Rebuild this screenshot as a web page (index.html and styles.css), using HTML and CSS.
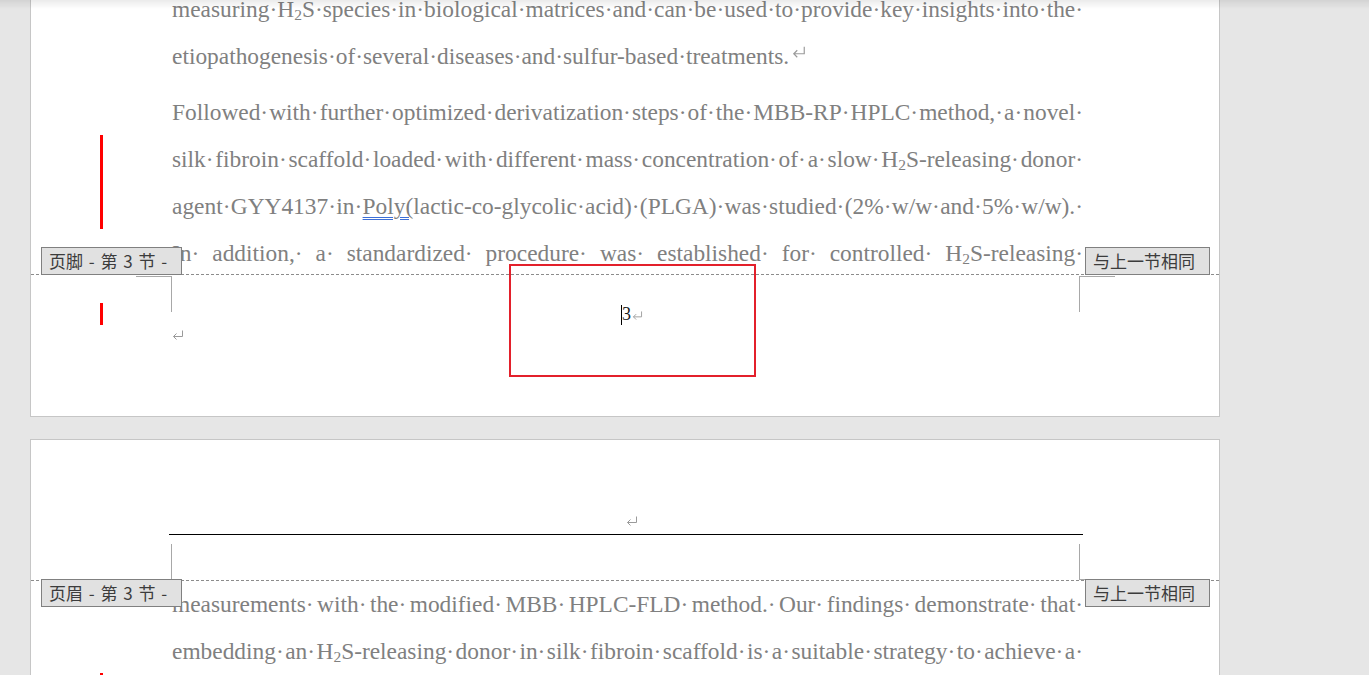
FILE: index.html
```html
<!DOCTYPE html>
<html lang="en">
<head>
<meta charset="utf-8">
<title>Document</title>
<link rel="stylesheet" href="styles.css">
</head>
<body>
<div class="doc">
  <div class="page page-1">
    <i class="bar bar-a"></i>
    <i class="bar bar-b"></i>
    <div class="text">
      <div class="para">
        <div class="ln j">measuring· H<sub>2</sub>S· species· in· biological· matrices· and· can· be· used· to· provide· key· insights· into· the·</div>
        <div class="ln l">etiopathogenesis·of·several·diseases·and·sulfur-based·treatments.<svg class="ret ret-body" viewBox="0 0 12 10"><path d="M10.5 0.5V6.5H1.5M4.5 3.5L1.5 6.5L4.5 9.5"/></svg></div>
      </div>
      <div class="para">
        <div class="ln j">Followed· with· further· optimized· derivatization· steps· of· the· MBB-RP· HPLC· method,· a· novel·</div>
        <div class="ln j">silk· fibroin· scaffold· loaded· with· different· mass· concentration· of· a· slow· H<sub>2</sub>S-releasing· donor·</div>
        <div class="ln j">agent· GYY4137· in· <span class="gram">Poly(</span>lactic-co-glycolic· acid)· (PLGA)· was· studied· (2%· w/w· and· 5%· w/w).·</div>
        <div class="ln j">In· addition,· a· standardized· procedure· was· established· for· controlled· H<sub>2</sub>S-releasing·</div>
      </div>
    </div>
    <div class="foot">
      <div class="sep"></div>
      <span class="tag tag-l tag-up">页脚 - 第 3 节 -</span>
      <span class="tag tag-r tag-up">与上一节相同</span>
      <div class="marks">
        <i class="mk mk-tl"></i>
        <i class="mk mk-tr"></i>
      </div>
      <div class="foot-para"><svg class="ret ret-foot" viewBox="0 0 12 10"><path d="M10.5 0.5V6.5H1.5M4.5 3.5L1.5 6.5L4.5 9.5"/></svg></div>
      <div class="pgbox">
        <div class="pgnum"><i class="caret"></i><span class="num">3</span><svg class="ret ret-num" viewBox="0 0 12 10"><path d="M10.5 0.5V6.5H1.5M4.5 3.5L1.5 6.5L4.5 9.5"/></svg></div>
      </div>
    </div>
  </div>

  <div class="page page-2">
    <i class="bar bar-c"></i>
    <div class="head">
      <div class="head-para"><svg class="ret ret-head" viewBox="0 0 12 10"><path d="M10.5 0.5V6.5H1.5M4.5 3.5L1.5 6.5L4.5 9.5"/></svg></div>
      <div class="marks marks-head">
        <i class="mk mk-bl"></i>
        <i class="mk mk-br"></i>
      </div>
    </div>
    <div class="body-2">
      <div class="sep"></div>
      <span class="tag tag-l tag-down">页眉 - 第 3 节 -</span>
      <span class="tag tag-r tag-down">与上一节相同</span>
      <div class="text">
        <div class="para">
          <div class="ln j">measurements· with· the· modified· MBB· HPLC-FLD· method.· Our· findings· demonstrate· that·</div>
          <div class="ln j">embedding· an· H<sub>2</sub>S-releasing· donor· in· silk· fibroin· scaffold· is· a· suitable· strategy· to· achieve· a·</div>
        </div>
      </div>
    </div>
  </div>
</div>
</body>
</html>
```

FILE: styles.css
```css
* { box-sizing: border-box; }

html, body {
  margin: 0;
  height: 675px;
  overflow: hidden;
}

body {
  background: #e6e6e6;
  font-family: "Liberation Serif", "Times New Roman", serif;
}

body::before {
  content: "";
  position: fixed;
  top: 0;
  left: 0;
  right: 0;
  height: 9px;
  background: linear-gradient(rgba(0, 0, 0, 0.08), rgba(0, 0, 0, 0));
  z-index: 20;
  pointer-events: none;
}

.doc {
  padding-left: 30px;
}

.page {
  position: relative;
  width: 1190px;
  background: #fff;
  border: 1px solid #c6c6c6;
}

.page-1 {
  margin-top: -14px;
  border-top: none;
}

.page-2 {
  margin-top: 22px;
}

/* change bars */
.bar {
  position: absolute;
  left: 69px;
  width: 3px;
  background: #ff0000;
}
.bar-a { top: 149px; height: 94px; }
.bar-b { top: 317px; height: 22px; }
.bar-c { top: 233px; height: 20px; }

/* body text */
.page-1 .text {
  height: 288px;
}

.text {
  margin-left: 141px;
  width: 911px;
  color: #808080;
  font-size: 23.4px;
  line-height: 47px;
}

.para + .para {
  margin-top: 9px;
}

.ln.l {
  white-space: nowrap;
}

.ln.j {
  text-align: justify;
  text-align-last: justify;
  word-spacing: -0.27em;
}

sub {
  font-size: 15.5px;
  line-height: 0;
  vertical-align: -3px;
}

.gram {
  text-decoration: underline double #3d6fd6;
  text-decoration-thickness: 1px;
  text-underline-offset: 3px;
}

/* paragraph marks */
.ret {
  display: inline-block;
  fill: none;
  stroke: #9a9a9a;
  stroke-width: 1;
}
.ret-body {
  width: 14px;
  height: 12px;
  margin-left: 3px;
  vertical-align: 6px;
}
.ret-foot, .ret-head {
  width: 12px;
  height: 10px;
  display: block;
}
.ret-num {
  width: 11px;
  height: 9px;
  margin-left: 1px;
  margin-bottom: 5px;
}

/* separators */
.sep {
  height: 1px;
  background: repeating-linear-gradient(to right, #8c8c8c 0 3px, transparent 3px 5px);
}

/* header / footer tags */
.tag {
  position: absolute;
  height: 28px;
  padding: 0 7px;
  background: #e1e1e1;
  border: 1px solid #808080;
  color: #3c3c3c;
  font-family: "Noto Sans CJK SC", "Noto Sans", sans-serif;
  font-size: 17px;
  line-height: 26px;
  white-space: pre;
  z-index: 5;
}
.tag-l { left: 10px; width: 141px; word-spacing: 2px; }
.tag-r { left: 1054px; width: 125px; }
.tag-up { top: -27px; }
.tag-down { top: -1px; }

/* footer */
.foot {
  position: relative;
  height: 142px;
}

.marks {
  display: flex;
  justify-content: space-between;
  margin-left: 105px;
  width: 979px;
  height: 36px;
}
.foot .marks {
  margin-top: 1px;
}
.mk {
  display: block;
  width: 36px;
  height: 36px;
  border: 0 solid #a8a8a8;
}
.mk-tl { border-top-width: 1px; border-right-width: 1px; }
.mk-tr { border-top-width: 1px; border-left-width: 1px; }
.mk-bl { border-bottom-width: 1px; border-right-width: 1px; }
.mk-br { border-bottom-width: 1px; border-left-width: 1px; }

.foot-para {
  margin: 18px 0 0 141px;
}

.pgbox {
  position: absolute;
  left: 478px;
  top: -10px;
  width: 247px;
  height: 113px;
  border: 2px solid #e3202b;
  z-index: 6;
}

.pgnum {
  display: flex;
  align-items: flex-end;
  height: 20px;
  margin: 39px 0 0 110px;
}

.caret {
  display: block;
  width: 1px;
  height: 20px;
  background: #000;
}

.num {
  font-size: 18px;
  line-height: 18px;
  color: #1a1a1a;
  margin-bottom: 2px;
}

/* page 2 header */
.head-para {
  display: flex;
  justify-content: center;
  align-items: flex-end;
  margin-left: 138px;
  width: 914px;
  height: 95px;
  padding: 0 0 8px 12px;
  border-bottom: 1px solid #000;
}

.marks-head {
  margin-top: 9px;
}

.body-2 {
  position: relative;
}
```
